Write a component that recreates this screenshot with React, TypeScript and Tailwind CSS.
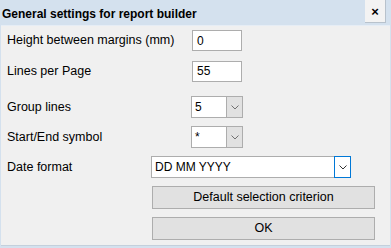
import React from 'react';

const font = { fontFamily: '"Liberation Sans", Arial, sans-serif' };

function Chevron({ dark }: { dark?: boolean }) {
  return (
    <svg width="8" height="5" viewBox="0 0 8 5" className="block">
      <path d="M0.5 0.5 L4 4 L7.5 0.5" fill="none" stroke={dark ? '#333333' : '#707070'} strokeWidth="1" />
    </svg>
  );
}

function TextBox({ value }: { value: string }) {
  return (
    <div className="w-[50px] h-[21px] bg-white border border-[#adadad] flex items-center pl-[4px] text-[12px] text-black">
      {value}
    </div>
  );
}

function Combo({ value, width, focused }: { value: string; width: string; focused?: boolean }) {
  return (
    <div className={`${width} h-[22px] bg-white border border-[#adadad] flex items-stretch text-[12px] text-black`}>
      <div className="flex-1 flex items-center pl-[3px]">{value}</div>
      {focused ? (
        <div className="w-[17px] -my-px -mr-px border border-[#0078d7] bg-white flex items-center justify-center">
          <Chevron dark />
        </div>
      ) : (
        <div className="w-[16px] border-l border-[#adadad] bg-[#e1e1e1] flex items-center justify-center">
          <Chevron />
        </div>
      )}
    </div>
  );
}

function Row({ label, children, className }: { label: string; children: React.ReactNode; className: string }) {
  return (
    <div className={`flex items-center ${className}`}>
      <div className="text-[12.5px] text-black pl-[6px]">{label}</div>
      {children}
    </div>
  );
}

export default function App() {
  return (
    <div className="w-[391px] h-[248px] bg-[#d4e1ee] flex flex-col overflow-hidden" style={font}>
      <div className="h-[25px] flex items-start justify-between pl-[2px]">
        <div className="text-[12px] font-bold text-black pt-[5px]">General settings for report builder</div>
        <div className="w-[21px] h-[23px] mr-[5px] bg-[#f3f3f3] border-r border-b border-[#b8c2cc] flex items-center justify-center">
          <span className="text-[13px] font-bold text-black leading-none">×</span>
        </div>
      </div>
      <div className="flex-1 mx-[1px] mb-[2px] bg-[#f0f0f0] border-t border-[#e6edf5] border-b border-b-[#c4d0dc]">
        <div className="flex flex-col">
          <Row label="Height between margins (mm)" className="h-[21px] mt-[4px] justify-between pr-[148px]">
            <TextBox value="0" />
          </Row>
          <Row label="Lines per Page" className="h-[22px] mt-[9px] justify-between pr-[148px]">
            <TextBox value="55" />
          </Row>
          <Row label="Group lines" className="h-[22px] mt-[14px] justify-between pr-[147px]">
            <Combo value="5" width="w-[52px]" />
          </Row>
          <Row label="Start/End symbol" className="h-[22px] mt-[8px] justify-between pr-[147px]">
            <Combo value="*" width="w-[52px]" />
          </Row>
          <Row label="Date format" className="h-[22px] mt-[8px] justify-between pr-[39px]">
            <Combo value="DD MM YYYY" width="w-[200px]" focused />
          </Row>
          <div className="mt-[8px] ml-[151px] w-[223px] h-[23px] bg-[#e1e1e1] border border-[#adadad] flex items-center justify-center text-[12.5px] text-black">
            Default selection criterion
          </div>
          <div className="mt-[8px] ml-[151px] w-[223px] h-[23px] bg-[#e1e1e1] border border-[#adadad] flex items-center justify-center text-[12.5px] text-black">
            OK
          </div>
        </div>
      </div>
    </div>
  );
}
